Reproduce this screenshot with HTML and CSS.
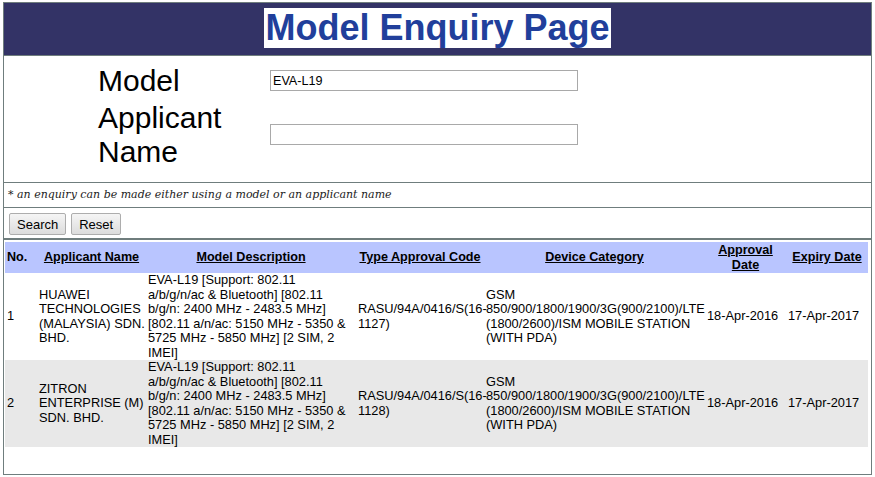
FILE: index.html
```html
<!DOCTYPE html>
<html>
<head>
<meta charset="utf-8">
<title>Model Enquiry Page</title>
<link rel="stylesheet" href="styles.css">
</head>
<body>
<div class="page">
  <header class="banner">
    <h1 class="title">Model Enquiry Page</h1>
  </header>
  <form class="search">
    <div class="fields">
      <label class="label" for="model">Model</label>
      <div class="field"><input id="model" class="text" type="text" value="EVA-L19"></div>
      <label class="label" for="applicant">Applicant Name</label>
      <div class="field"><input id="applicant" class="text" type="text" value=""></div>
    </div>
    <p class="note">* an enquiry can be made either using a model or an applicant name</p>
    <div class="actions">
      <button type="button" class="btn">Search</button>
      <button type="reset" class="btn">Reset</button>
    </div>
  </form>
  <div class="results">
    <table class="grid">
      <colgroup>
        <col class="c-no"><col class="c-app"><col class="c-desc"><col class="c-code"><col class="c-cat"><col class="c-date"><col class="c-exp">
      </colgroup>
      <thead>
        <tr>
          <th class="th-no">No.</th>
          <th><a href="#">Applicant Name</a></th>
          <th><a href="#">Model Description</a></th>
          <th><a href="#">Type Approval Code</a></th>
          <th><a href="#">Device Category</a></th>
          <th><a href="#">Approval<br>Date</a></th>
          <th><a href="#">Expiry Date</a></th>
        </tr>
      </thead>
      <tbody>
        <tr>
          <td>1</td>
          <td>HUAWEI<br>TECHNOLOGIES<br>(MALAYSIA) SDN.<br>BHD.</td>
          <td>EVA-L19 [Support: 802.11<br>a/b/g/n/ac &amp; Bluetooth] [802.11<br>b/g/n: 2400 MHz - 2483.5 MHz]<br>[802.11 a/n/ac: 5150 MHz - 5350 &amp;<br>5725 MHz - 5850 MHz] [2 SIM, 2<br>IMEI]</td>
          <td>RASU/94A/0416/S(16-<br>1127)</td>
          <td>GSM<br>850/900/1800/1900/3G(900/2100)/LTE<br>(1800/2600)/ISM MOBILE STATION<br>(WITH PDA)</td>
          <td>18-Apr-2016</td>
          <td>17-Apr-2017</td>
        </tr>
        <tr class="alt">
          <td>2</td>
          <td>ZITRON<br>ENTERPRISE (M)<br>SDN. BHD.</td>
          <td>EVA-L19 [Support: 802.11<br>a/b/g/n/ac &amp; Bluetooth] [802.11<br>b/g/n: 2400 MHz - 2483.5 MHz]<br>[802.11 a/n/ac: 5150 MHz - 5350 &amp;<br>5725 MHz - 5850 MHz] [2 SIM, 2<br>IMEI]</td>
          <td>RASU/94A/0416/S(16-<br>1128)</td>
          <td>GSM<br>850/900/1800/1900/3G(900/2100)/LTE<br>(1800/2600)/ISM MOBILE STATION<br>(WITH PDA)</td>
          <td>18-Apr-2016</td>
          <td>17-Apr-2017</td>
        </tr>
      </tbody>
    </table>
  </div>
</div>
</body>
</html>
```

FILE: styles.css
```css
html, body {
  margin: 0;
  padding: 0;
  background: #ffffff;
}

body {
  font-family: "Liberation Sans", Arial, sans-serif;
  color: #000;
}

.page {
  box-sizing: border-box;
  width: 869px;
  height: 473px;
  margin: 2px 0 0 3px;
  border: 1px solid #6f7d7d;
  display: flex;
  flex-direction: column;
}

.banner {
  height: 52px;
  background: #333366;
  border-bottom: 1px solid #6f7d7d;
  display: flex;
  justify-content: center;
  align-items: flex-start;
}

.title {
  margin: 5px 0 0;
  background: #ffffff;
  color: #213f9b;
  font-family: "Liberation Sans", Arial, sans-serif;
  font-weight: bold;
  font-size: 36px;
  line-height: 40px;
  padding: 0 1px;
}

.search {
  margin: 0;
}

.fields {
  display: grid;
  grid-template-columns: 172px 308px;
  row-gap: 3px;
  padding: 8px 0 13px 94px;
  border-bottom: 1px solid #6f7d7d;
  align-items: center;
}

.label {
  font-size: 30px;
  line-height: 34px;
}

.field {
  display: flex;
  align-items: center;
}

.text {
  box-sizing: border-box;
  width: 308px;
  height: 21px;
  margin: -1px 0 0;
  border: 1px solid #a9a9a9;
  padding: 1px 2px;
  font-family: "Liberation Sans", Arial, sans-serif;
  font-size: 12.6px;
  color: #000;
  background: #fff;
}

.note {
  margin: 0;
  height: 24px;
  padding: 0 0 0 4px;
  border-bottom: 1px solid #6f7d7d;
  font-family: "DejaVu Serif", Georgia, serif;
  font-style: italic;
  font-size: 11px;
  line-height: 24px;
  color: #222;
}

.actions {
  display: flex;
  gap: 5px;
  padding: 5px 0 3px 5px;
  border-bottom: 2px solid #6f7d7d;
}

.btn {
  height: 22px;
  margin: 0;
  padding: 0 7px;
  border: 1px solid #adadad;
  border-radius: 2px;
  background: linear-gradient(#f5f5f5, #dcdcdc);
  font-family: "Liberation Sans", Arial, sans-serif;
  font-size: 13px;
  color: #000;
}

.results {
  padding: 2px 1px 0 1px;
}

.grid {
  width: 863px;
  table-layout: fixed;
  border-collapse: collapse;
  font-size: 12.8px;
  line-height: 14.5px;
}

.c-no { width: 32px; }
.c-app { width: 109px; }
.c-desc { width: 210px; }
.c-code { width: 128px; }
.c-cat { width: 221px; }
.c-date { width: 81px; }
.c-exp { width: 82px; }

.grid th {
  background: #b9c5ff;
  height: 31px;
  padding: 0 2px;
  font-weight: bold;
  font-size: 12.6px;
  line-height: 15px;
  text-align: center;
  vertical-align: middle;
  white-space: nowrap;
}

.grid th.th-no {
  text-align: left;
}

.grid th a {
  color: #000;
  text-decoration: underline;
}

.grid td {
  padding: 0 2px;
  height: 87px;
  vertical-align: middle;
  text-align: left;
  white-space: nowrap;
}

.grid tr.alt td {
  background: #e8e8e8;
}
```
